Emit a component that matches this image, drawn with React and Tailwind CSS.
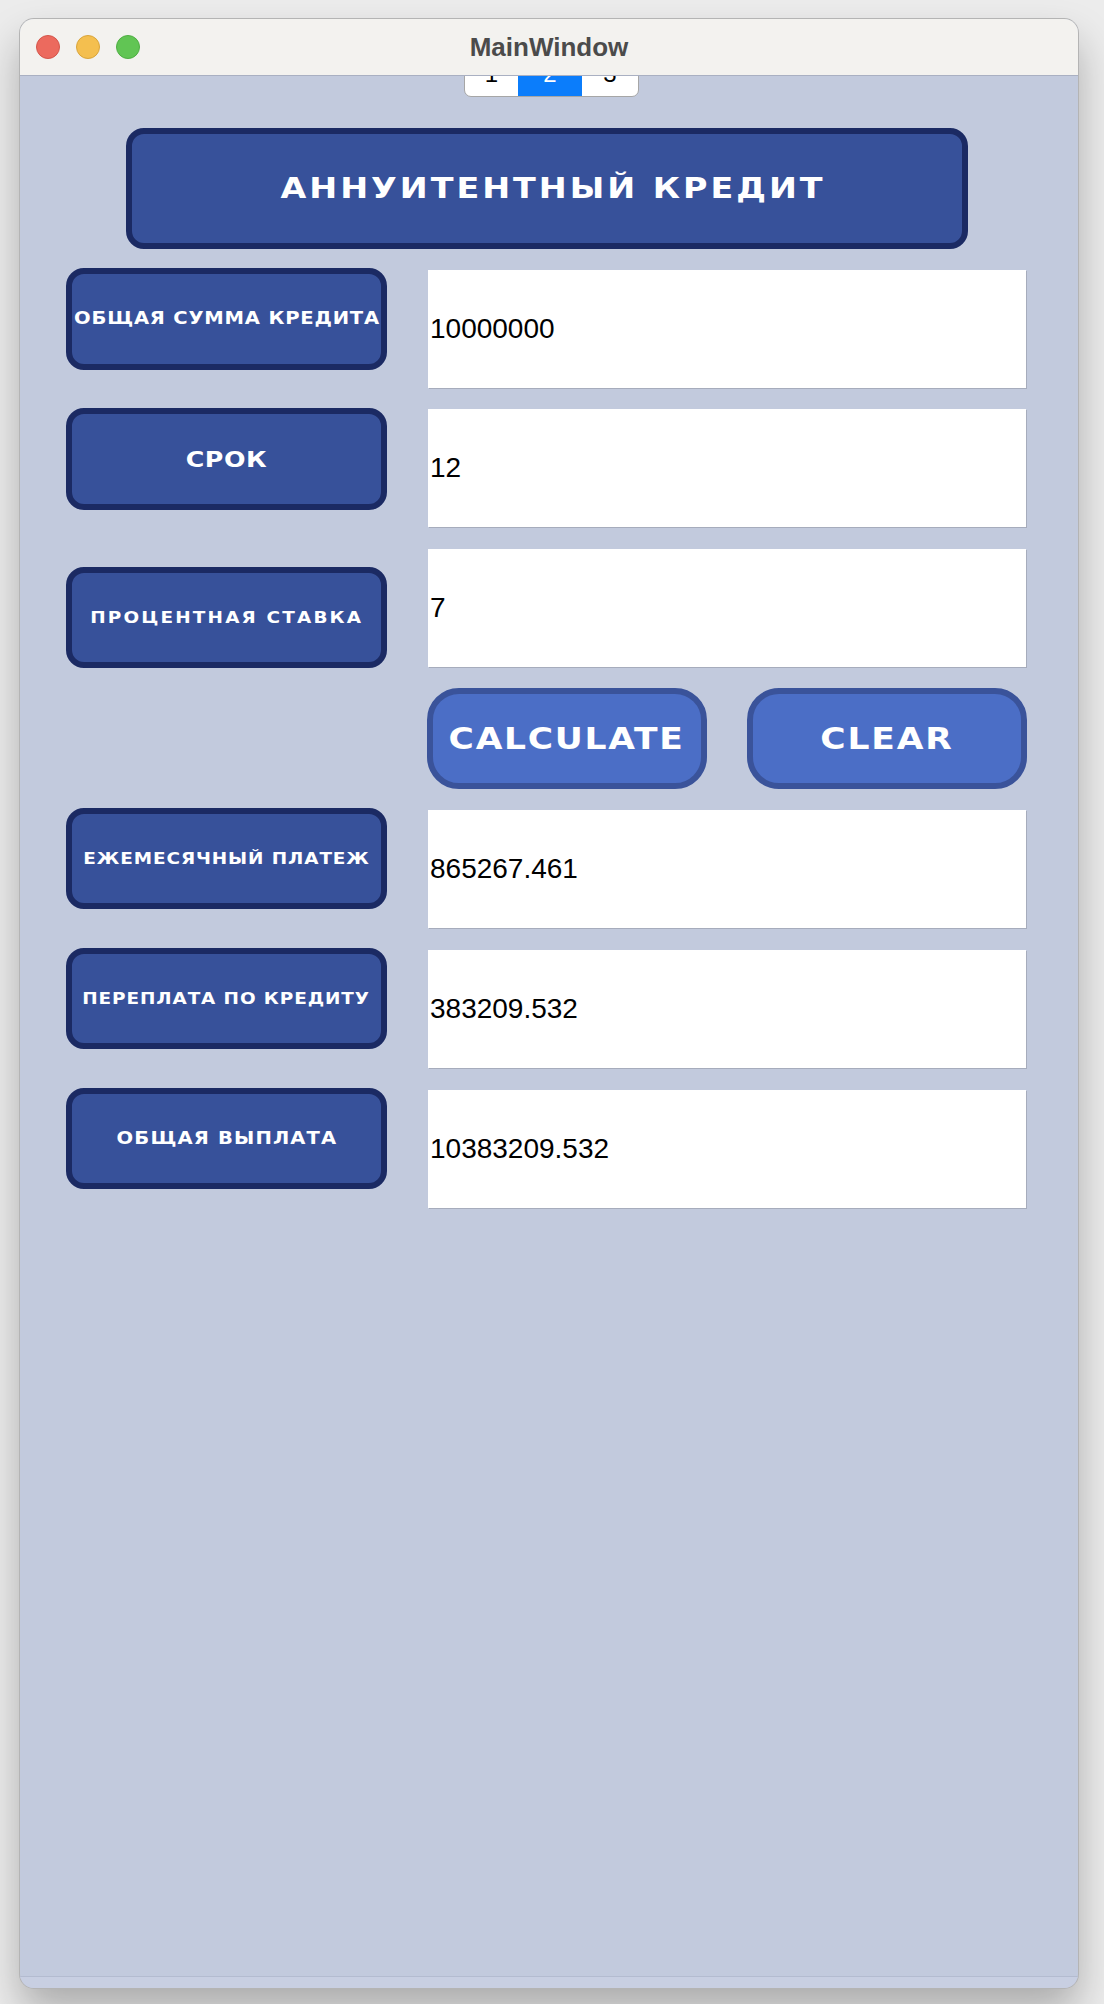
import React from "react";

const labelBase =
  "flex items-center justify-center rounded-[18px] border-[6px] border-[#1b2a63] bg-[#37519a] text-white font-bold uppercase whitespace-nowrap";

function Label({ className, textClass, children }) {
  return (
    <div
      className={`${labelBase} ${className}`}
      style={{ fontFamily: '"DejaVu Sans", sans-serif' }}
    >
      <span className={`inline-block scale-x-[1.15] ${textClass}`}>{children}</span>
    </div>
  );
}

function Field({ className, value }) {
  return (
    <div
      className={`w-[598px] h-[118px] bg-white flex items-center pl-[2px] text-[28px] text-black shadow-[1px_1px_0_#a6acbc] ${className}`}
      style={{ fontFamily: '"Liberation Sans", Arial, sans-serif' }}
    >
      {value}
    </div>
  );
}

export default function App() {
  return (
    <div className="w-[1104px] h-[2004px] bg-[#ececec] pt-[19px] pl-[20px]">
      <div className="w-[1058px] h-[1969px] rounded-[14px] overflow-hidden bg-[#c2cadd] flex flex-col shadow-[0_0_0_1px_#b4b4b4,0_22px_40px_rgba(0,0,0,0.28)]">
        {/* Title bar */}
        <div className="relative z-10 h-[57px] shrink-0 bg-[#f3f2ef] border-b border-[#a9b0c2] flex items-center">
          <div className="flex items-center gap-[16px] pl-[16px]">
            <div className="w-[24px] h-[24px] rounded-full bg-[#ec6a5e] border border-[#d4564b]" />
            <div className="w-[24px] h-[24px] rounded-full bg-[#f4bf4f] border border-[#d9a53b]" />
            <div className="w-[24px] h-[24px] rounded-full bg-[#61c554] border border-[#4fae43]" />
          </div>
          <div
            className="absolute inset-0 flex items-center justify-center text-[26px] font-bold text-[#4b4b4b] pointer-events-none"
            style={{ fontFamily: '"Liberation Sans", Arial, sans-serif' }}
          >
            MainWindow
          </div>
        </div>

        {/* Content */}
        <div className="flex-1 flex flex-col">
          {/* Tabs */}
          <div className="flex justify-center -mt-[12px] ml-[5px]">
            <div
              className="flex h-[33px] rounded-b-[7px] overflow-hidden bg-white border border-[#a6a6a6] text-[24px] leading-none"
              style={{ fontFamily: '"Liberation Sans", Arial, sans-serif' }}
            >
              <div className="w-[53px] flex items-end justify-center pb-[10px] text-black">1</div>
              <div className="w-[64px] flex items-end justify-center pb-[10px] bg-[#0b7dfb] text-white">2</div>
              <div className="w-[56px] flex items-end justify-center pb-[10px] text-black">3</div>
            </div>
          </div>

          {/* Header */}
          <div className="ml-[106px] mt-[31px]">
            <Label className="w-[842px] h-[121px]" textClass="text-[29px] tracking-[2.6px] ml-[12px]">
              Аннуитентный кредит
            </Label>
          </div>

          {/* Row 1 */}
          <div className="flex items-start ml-[46px] gap-[41px] mt-[19px]">
            <Label className="w-[321px] h-[102px]" textClass="text-[17px] tracking-[0.7px]">
              Общая сумма кредита
            </Label>
            <Field className="mt-[2px]" value="10000000" />
          </div>

          {/* Row 2 */}
          <div className="flex items-start ml-[46px] gap-[41px] mt-[20px]">
            <Label className="w-[321px] h-[102px]" textClass="text-[22px] tracking-[0.5px]">
              Срок
            </Label>
            <Field className="mt-[1px]" value="12" />
          </div>

          {/* Row 3 */}
          <div className="flex items-start ml-[46px] gap-[41px] mt-[22px]">
            <Label className="w-[321px] h-[101px] mt-[18px]" textClass="text-[16px] tracking-[1.9px]">
              Процентная ставка
            </Label>
            <Field value="7" />
          </div>

          {/* Buttons */}
          <div
            className="flex ml-[407px] gap-[40px] mt-[20px]"
            style={{ fontFamily: '"DejaVu Sans", sans-serif' }}
          >
            <div className="w-[280px] h-[101px] rounded-[32px] border-[6px] border-[#3a539a] bg-[#4b6ec6] flex items-center justify-center text-white font-bold text-[30px]">
              <span className="inline-block scale-x-[1.15] tracking-[1.5px]">CALCULATE</span>
            </div>
            <div className="w-[280px] h-[101px] rounded-[32px] border-[6px] border-[#3a539a] bg-[#4b6ec6] flex items-center justify-center text-white font-bold text-[30px]">
              <span className="inline-block scale-x-[1.15] tracking-[1.6px]">CLEAR</span>
            </div>
          </div>

          {/* Row 4 */}
          <div className="flex items-start ml-[46px] gap-[41px] mt-[19px]">
            <Label className="w-[321px] h-[101px]" textClass="text-[16px] tracking-[0.8px]">
              Ежемесячный платеж
            </Label>
            <Field className="mt-[2px]" value="865267.461" />
          </div>

          {/* Row 5 */}
          <div className="flex items-start ml-[46px] gap-[41px] mt-[20px]">
            <Label className="w-[321px] h-[101px]" textClass="text-[16px] tracking-[0.8px]">
              Переплата по кредиту
            </Label>
            <Field className="mt-[2px]" value="383209.532" />
          </div>

          {/* Row 6 */}
          <div className="flex items-start ml-[46px] gap-[41px] mt-[20px]">
            <Label className="w-[321px] h-[101px]" textClass="text-[17px] tracking-[1px]">
              Общая выплата
            </Label>
            <Field className="mt-[2px]" value="10383209.532" />
          </div>
        </div>

        {/* Bottom strip */}
        <div className="h-[12px] shrink-0 bg-[#c8cfe2] border-t border-[#b3bbd0]" />
      </div>
    </div>
  );
}
